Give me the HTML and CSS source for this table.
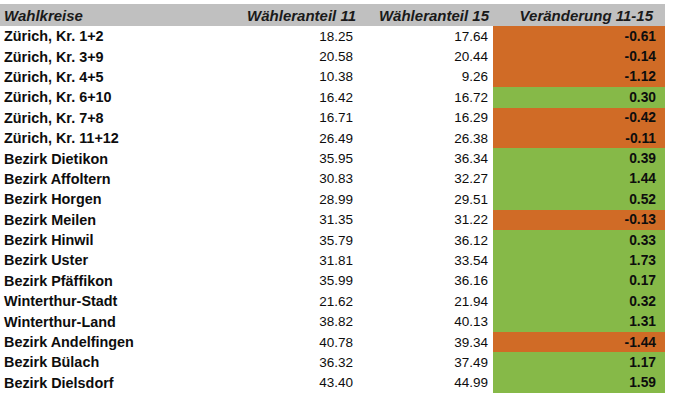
FILE: index.html
```html
<!DOCTYPE html>
<html lang="de">
<head>
<meta charset="utf-8">
<title>Wähleranteil</title>
<link rel="stylesheet" href="styles.css">
</head>
<body>
<div class="table">
  <div class="row head">
    <div class="c name">Wahlkreise</div>
    <div class="c num">Wähleranteil 11</div>
    <div class="c num">Wähleranteil 15</div>
    <div class="c chg">Veränderung 11-15</div>
  </div>
  <div class="row"><div class="c name">Zürich, Kr. 1+2</div><div class="c num">18.25</div><div class="c num">17.64</div><div class="c chg neg">-0.61</div></div>
  <div class="row"><div class="c name">Zürich, Kr. 3+9</div><div class="c num">20.58</div><div class="c num">20.44</div><div class="c chg neg">-0.14</div></div>
  <div class="row"><div class="c name">Zürich, Kr. 4+5</div><div class="c num">10.38</div><div class="c num">9.26</div><div class="c chg neg">-1.12</div></div>
  <div class="row"><div class="c name">Zürich, Kr. 6+10</div><div class="c num">16.42</div><div class="c num">16.72</div><div class="c chg pos">0.30</div></div>
  <div class="row"><div class="c name">Zürich, Kr. 7+8</div><div class="c num">16.71</div><div class="c num">16.29</div><div class="c chg neg">-0.42</div></div>
  <div class="row"><div class="c name">Zürich, Kr. 11+12</div><div class="c num">26.49</div><div class="c num">26.38</div><div class="c chg neg">-0.11</div></div>
  <div class="row"><div class="c name">Bezirk Dietikon</div><div class="c num">35.95</div><div class="c num">36.34</div><div class="c chg pos">0.39</div></div>
  <div class="row"><div class="c name">Bezirk Affoltern</div><div class="c num">30.83</div><div class="c num">32.27</div><div class="c chg pos">1.44</div></div>
  <div class="row"><div class="c name">Bezirk Horgen</div><div class="c num">28.99</div><div class="c num">29.51</div><div class="c chg pos">0.52</div></div>
  <div class="row"><div class="c name">Bezirk Meilen</div><div class="c num">31.35</div><div class="c num">31.22</div><div class="c chg neg">-0.13</div></div>
  <div class="row"><div class="c name">Bezirk Hinwil</div><div class="c num">35.79</div><div class="c num">36.12</div><div class="c chg pos">0.33</div></div>
  <div class="row"><div class="c name">Bezirk Uster</div><div class="c num">31.81</div><div class="c num">33.54</div><div class="c chg pos">1.73</div></div>
  <div class="row"><div class="c name">Bezirk Pfäffikon</div><div class="c num">35.99</div><div class="c num">36.16</div><div class="c chg pos">0.17</div></div>
  <div class="row"><div class="c name">Winterthur-Stadt</div><div class="c num">21.62</div><div class="c num">21.94</div><div class="c chg pos">0.32</div></div>
  <div class="row"><div class="c name">Winterthur-Land</div><div class="c num">38.82</div><div class="c num">40.13</div><div class="c chg pos">1.31</div></div>
  <div class="row"><div class="c name">Bezirk Andelfingen</div><div class="c num">40.78</div><div class="c num">39.34</div><div class="c chg neg">-1.44</div></div>
  <div class="row"><div class="c name">Bezirk Bülach</div><div class="c num">36.32</div><div class="c num">37.49</div><div class="c chg pos">1.17</div></div>
  <div class="row"><div class="c name">Bezirk Dielsdorf</div><div class="c num">43.40</div><div class="c num">44.99</div><div class="c chg pos">1.59</div></div>
</div>
</body>
</html>
```

FILE: styles.css
```css
html, body {
  margin: 0;
  padding: 0;
  background: #ffffff;
}
body {
  padding-top: 4px;
  font-family: "Liberation Sans", Arial, sans-serif;
  font-size: 13.5px;
  color: #0d0d0d;
}
.table {
  width: 665px;
}
.row {
  display: grid;
  grid-template-columns: 218px 139px 136px 172px;
  height: 20.4px;
  align-items: center;
}
.row.head {
  height: 22px;
  background: #c0c0c0;
  font-size: 15px;
  font-style: italic;
  font-weight: bold;
  color: #1a1a1a;
}
.c {
  height: 100%;
  display: flex;
  align-items: center;
  white-space: nowrap;
}
.name {
  padding-left: 4px;
  font-weight: bold;
  font-size: 14.4px;
}
.row.head .name {
  font-size: 15px;
}
.num {
  justify-content: flex-end;
  padding-right: 4px;
}
.row.head .num:nth-child(2) {
  padding-right: 1px;
}
.row.head .num:nth-child(3) {
  padding-right: 4px;
}
.row .num:nth-child(3) {
  padding-right: 5px;
}
.chg {
  justify-content: flex-end;
  padding-right: 9px;
  font-weight: bold;
  font-size: 13.8px;
}
.row.head .chg {
  padding-right: 12px;
  font-size: 15px;
}
.neg {
  background: #d06b26;
}
.pos {
  background: #86b948;
}
```
